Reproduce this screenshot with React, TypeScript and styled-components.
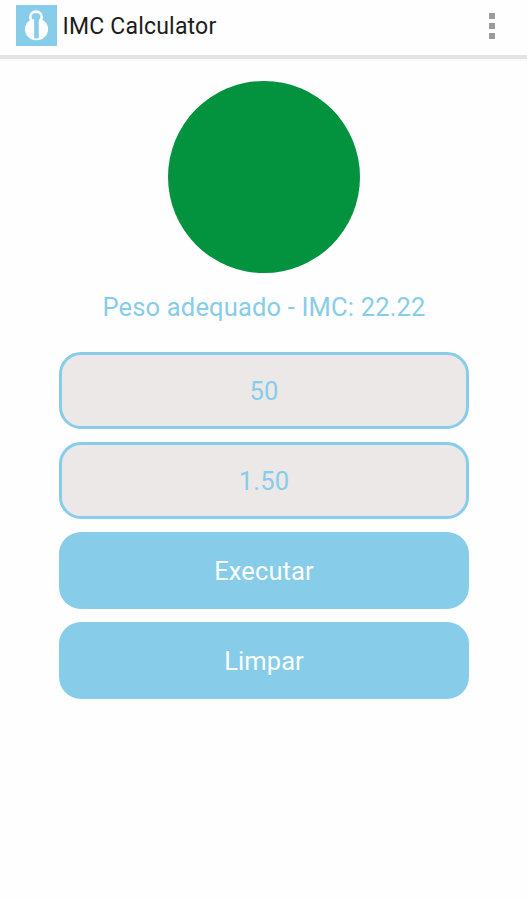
import React, { useState } from "react";
import styled, { createGlobalStyle } from "styled-components";

const sky = "#87cde9";

const GlobalStyle = createGlobalStyle`
  *, *::before, *::after { box-sizing: border-box; }
  body { margin: 0; background: #fefefe; font-family: Roboto, sans-serif; }
`;

const Screen = styled.div`
  display: flex;
  flex-direction: column;
  height: 900px;
  background: #fefefe;
`;

const AppBar = styled.header`
  display: flex;
  align-items: flex-start;
  height: 59px;
  padding: 5px 32px 0 16px;
  border-bottom: 4px solid #e4e4e4;
  box-shadow: 0 1px 3px #f4f4f4;
`;

const Logo = styled.svg`
  width: 41px;
  height: 41px;
  flex: none;
`;

const Title = styled.h1`
  flex: 1;
  margin: 1px 0 0 5.5px;
  font-size: 23px;
  line-height: 41px;
  font-weight: 400;
  letter-spacing: 0.2px;
  color: #1c1c1c;
`;

const MenuButton = styled.button`
  display: flex;
  flex-direction: column;
  gap: 4px;
  margin-top: 7.5px;
  padding: 0;
  border: 0;
  background: none;
`;

const Dot = styled.span`
  width: 6px;
  height: 6px;
  background: #9b9b9b;
`;

const Content = styled.main`
  display: flex;
  flex-direction: column;
  align-items: center;
  padding: 22px 58px 0 59px;
`;

const Indicator = styled.div`
  width: 192px;
  height: 192px;
  border-radius: 50%;
  background: #03923d;
`;

const Result = styled.p`
  margin: 14px 0 25px;
  height: 40px;
  font-size: 25.5px;
  line-height: 40px;
  letter-spacing: 0.17px;
  white-space: nowrap;
  color: ${sky};
`;

const Form = styled.form`
  display: flex;
  flex-direction: column;
  gap: 13.5px;
  width: 100%;
`;

const Field = styled.input`
  width: 100%;
  height: 76.5px;
  padding: 1px 0 0;
  border: 3.5px solid ${sky};
  border-radius: 22px;
  outline: none;
  background: #ebe8e7;
  font: 400 25.5px Roboto, sans-serif;
  letter-spacing: 0.17px;
  text-align: center;
  color: ${sky};
`;

const Action = styled.button`
  width: 100%;
  height: 76.5px;
  padding: 1px 0 0;
  border: 0;
  border-radius: 22px;
  background: ${sky};
  font: 400 25.5px Roboto, sans-serif;
  letter-spacing: 0.1px;
  color: #fbfeff;
`;

export default function App() {
  const [weight, setWeight] = useState("50");
  const [height, setHeight] = useState("1.50");

  return (
    <Screen>
      <GlobalStyle />
      <AppBar>
        <Logo viewBox="0 0 41 41">
          <rect width="41" height="41" fill={sky} />
          <ellipse cx="20.5" cy="24.2" rx="11.6" ry="11" fill="#fff" />
          <path d="M15.6 15.5Q14.3 13.8 14.3 11.9A5.7 5.3 0 0 1 25.7 11.9Q25.7 13.8 24.4 15.5Z" fill={sky} stroke="#fff" strokeWidth="2.6" />
          <path d="M18.2 13.5H22.8V33.4H18.2Z" fill={sky} />
        </Logo>
        <Title>IMC Calculator</Title>
        <MenuButton type="button" aria-label="Menu">
          <Dot />
          <Dot />
          <Dot />
        </MenuButton>
      </AppBar>
      <Content>
        <Indicator />
        <Result>Peso adequado - IMC: 22.22</Result>
        <Form onSubmit={(e) => e.preventDefault()}>
          <Field value={weight} onChange={(e) => setWeight(e.target.value)} />
          <Field value={height} onChange={(e) => setHeight(e.target.value)} />
          <Action type="submit">Executar</Action>
          <Action
            type="button"
            onClick={() => {
              setWeight("");
              setHeight("");
            }}
          >
            Limpar
          </Action>
        </Form>
      </Content>
    </Screen>
  );
}
